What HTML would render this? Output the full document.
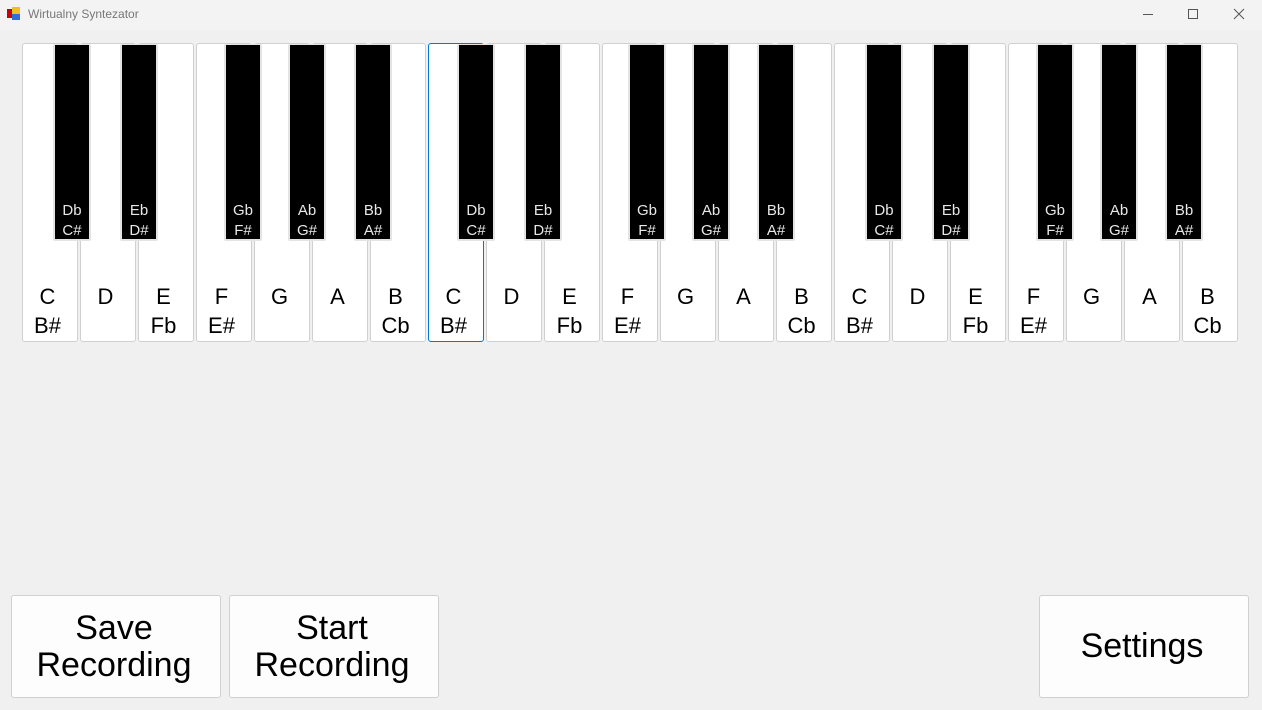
<!DOCTYPE html>
<html><head><meta charset="utf-8"><style>
body{margin:0;width:1262px;height:710px;background:#f0f0f0;font-family:"Liberation Sans",Arial,sans-serif;position:relative;overflow:hidden}
.tb{position:absolute;left:0;top:0;width:1262px;height:30px;background:#f3f3f3}
.tt{position:absolute;left:28px;top:7px;font-size:12px;color:#777}
.w{position:absolute;top:43px;width:54px;height:297px;background:#fff;border:1px solid #d0d0d0;border-radius:3px;text-align:center;font-size:22px;line-height:29px;box-sizing:content-box}
.w span{position:absolute;left:0;right:5px;top:238px}
.b{position:absolute;top:44px;width:34px;height:194px;background:#000;border:2px solid #e4e4e4;border-top:1px solid #e4e4e4;border-radius:2px;color:#e8e8e8;text-align:center;font-size:15px;line-height:20px}
.b span{position:absolute;left:0;right:0;top:156px}
.btn{position:absolute;top:595px;width:204px;padding-right:4px;height:101px;background:#fdfdfd;border:1px solid #d0d0d0;border-radius:3px;display:flex;align-items:center;justify-content:center;text-align:center;font-size:34px;line-height:37px}
</style></head><body>
<div class="tb">
<svg style="position:absolute;left:7px;top:7px" width="14" height="14"><rect x="0" y="2" width="6" height="9" fill="#c00"/><rect x="5" y="0" width="8" height="8" fill="#f0c020"/><rect x="5" y="7" width="8" height="6" fill="#3070d0"/></svg>
<div class="tt">Wirtualny Syntezator</div>
<svg style="position:absolute;left:1142px;top:8px" width="110" height="14" fill="none" stroke="#555" stroke-width="1"><line x1="1" y1="6.5" x2="11" y2="6.5"/><rect x="46.5" y="1.5" width="9" height="9"/><path d="M92 1L102 11M102 1L92 11"/></svg>
</div>

<div class="w" style="left:22px"><span>C<br>B#</span></div>
<div class="w" style="left:80px"><span>D</span></div>
<div class="w" style="left:138px"><span>E<br>Fb</span></div>
<div class="w" style="left:196px"><span>F<br>E#</span></div>
<div class="w" style="left:254px"><span>G</span></div>
<div class="w" style="left:312px"><span>A</span></div>
<div class="w" style="left:370px"><span>B<br>Cb</span></div>
<div class="w" style="left:428px;border-color:#0078d7"><span>C<br>B#</span></div>
<div class="w" style="left:486px"><span>D</span></div>
<div class="w" style="left:544px"><span>E<br>Fb</span></div>
<div class="w" style="left:602px"><span>F<br>E#</span></div>
<div class="w" style="left:660px"><span>G</span></div>
<div class="w" style="left:718px"><span>A</span></div>
<div class="w" style="left:776px"><span>B<br>Cb</span></div>
<div class="w" style="left:834px"><span>C<br>B#</span></div>
<div class="w" style="left:892px"><span>D</span></div>
<div class="w" style="left:950px"><span>E<br>Fb</span></div>
<div class="w" style="left:1008px"><span>F<br>E#</span></div>
<div class="w" style="left:1066px"><span>G</span></div>
<div class="w" style="left:1124px"><span>A</span></div>
<div class="w" style="left:1182px"><span>B<br>Cb</span></div>

<div class="b" style="left:53px"><span>Db<br>C#</span></div>
<div class="b" style="left:120px"><span>Eb<br>D#</span></div>
<div class="b" style="left:224px"><span>Gb<br>F#</span></div>
<div class="b" style="left:288px"><span>Ab<br>G#</span></div>
<div class="b" style="left:354px"><span>Bb<br>A#</span></div>
<div class="b" style="left:457px"><span>Db<br>C#</span></div>
<div class="b" style="left:524px"><span>Eb<br>D#</span></div>
<div class="b" style="left:628px"><span>Gb<br>F#</span></div>
<div class="b" style="left:692px"><span>Ab<br>G#</span></div>
<div class="b" style="left:757px"><span>Bb<br>A#</span></div>
<div class="b" style="left:865px"><span>Db<br>C#</span></div>
<div class="b" style="left:932px"><span>Eb<br>D#</span></div>
<div class="b" style="left:1036px"><span>Gb<br>F#</span></div>
<div class="b" style="left:1100px"><span>Ab<br>G#</span></div>
<div class="b" style="left:1165px"><span>Bb<br>A#</span></div>

<div class="btn" style="left:11px">Save<br>Recording</div>
<div class="btn" style="left:229px">Start<br>Recording</div>
<div class="btn" style="left:1039px">Settings</div>
</body></html>
